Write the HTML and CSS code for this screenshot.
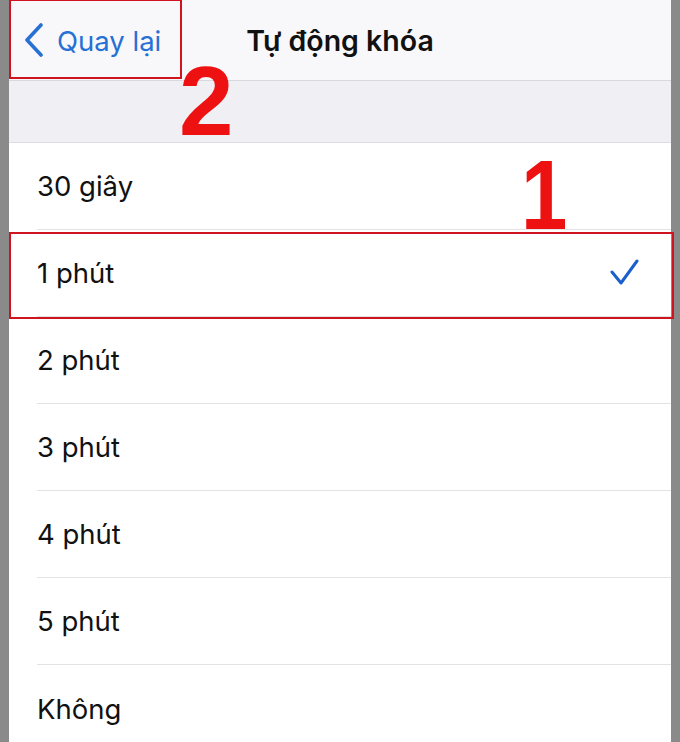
FILE: index.html
```html
<!DOCTYPE html>
<html lang="vi">
<head>
<meta charset="utf-8">
<title>Tự động khóa</title>
<link rel="stylesheet" href="styles.css">
</head>
<body>
<div class="frame">
  <div class="edge"></div>
  <main class="screen">
    <header class="navbar">
      <a class="back">
        <svg class="chevron" width="20" height="34" viewBox="0 0 20 34"><polyline points="17,2 3,17 17,32" fill="none" stroke="currentColor" stroke-width="3.6" stroke-linecap="round" stroke-linejoin="round"/></svg>
        <span>Quay lại</span>
      </a>
      <h1 class="title">Tự động khóa</h1>
      <span></span>
    </header>
    <div class="gap"></div>
    <ul class="options">
      <li class="option"><span>30 giây</span></li>
      <li class="option selected"><span>1 phút</span>
        <svg class="check" width="30" height="28" viewBox="0 0 30 28"><polyline points="3,14 12,25 28,3" fill="none" stroke="currentColor" stroke-width="3" stroke-linecap="round" stroke-linejoin="round"/></svg>
      </li>
      <li class="option"><span>2 phút</span></li>
      <li class="option"><span>3 phút</span></li>
      <li class="option"><span>4 phút</span></li>
      <li class="option"><span>5 phút</span></li>
      <li class="option"><span>Không</span></li>
    </ul>
  </main>
  <div class="edge"></div>

  <div class="mark mark-back"></div>
  <div class="mark mark-row"></div>
  <div class="step step-2">2</div>
  <div class="step step-1">1</div>
</div>
</body>
</html>
```
FILE: styles.css
```css
* { box-sizing: border-box; }

html, body {
  margin: 0;
  padding: 0;
  background: #8c8c8c;
}

.frame {
  position: relative;
  display: flex;
  width: 680px;
  height: 742px;
  overflow: hidden;
  font-family: Inter, "Liberation Sans", sans-serif;
}

.edge {
  width: 9px;
  flex: none;
  background: #8a8a8a;
}

.screen {
  flex: 1;
  background: #fff;
  display: flex;
  flex-direction: column;
}

.navbar {
  height: 81px;
  flex: none;
  background: #f8f8fa;
  border-bottom: 1.5px solid #d9d9dd;
  display: grid;
  grid-template-columns: 1fr auto 1fr;
  align-items: center;
  padding-top: 1px;
}

.back {
  display: flex;
  align-items: center;
  color: #2670d6;
  font-size: 27.5px;
  padding-left: 15px;
  gap: 13px;
}

.chevron { margin-top: -1px; }

.title {
  margin: 0;
  font-size: 28.5px;
  font-weight: 600;
  color: #111;
  letter-spacing: 0;
}

.gap {
  height: 62px;
  flex: none;
  background: #efeff4;
  border-bottom: 1.5px solid #dedee2;
}

.options {
  list-style: none;
  margin: 0;
  padding: 0 0 0 28px;
  background: #fff;
}

.option {
  height: 87px;
  display: flex;
  align-items: center;
  justify-content: space-between;
  padding-right: 32px;
  border-bottom: 1.5px solid #e3e3e6;
  font-size: 27.5px;
  color: #111;
  letter-spacing: 0;
}

.option:last-child { border-bottom: none; }

.check {
  color: #1a5fcc;
  margin-top: -2px;
}

/* red annotation frames and step numbers */
.mark {
  position: absolute;
  border: 2.5px solid #cf1420;
}

.mark-back {
  left: 9px;
  top: -1px;
  width: 173px;
  height: 80px;
}

.mark-row {
  left: 9px;
  top: 232px;
  width: 665px;
  height: 87px;
}

.step {
  position: absolute;
  font-family: "Liberation Sans", Arial, sans-serif;
  font-weight: 700;
  font-size: 98px;
  line-height: 1;
  color: #ee1111;
}

.step-2 { left: 179px; top: 52px; }
.step-1 { left: 521px; top: 146px; transform: scaleX(0.85); transform-origin: left top; }
```
